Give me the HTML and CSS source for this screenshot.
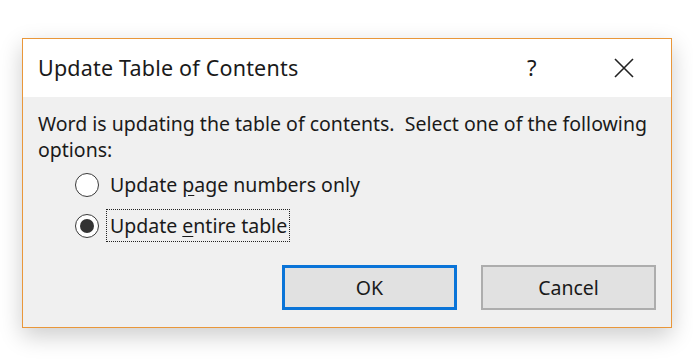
FILE: index.html
```html
<!DOCTYPE html>
<html lang="en">
  <head>
    <meta charset="UTF-8" />
    <title>Update Table of Contents</title>
    <link rel="stylesheet" href="styles.css">
  </head>
  <body>
    <div class="dialog">
      <div class="titlebar">
        <span class="title">Update Table of Contents</span>
        <span class="help">?</span>
        <svg class="close" width="20" height="20" viewBox="0 0 20 20">
          <path d="M1 1 L19 19 M19 1 L1 19" stroke="#222" stroke-width="1.6" fill="none" />
        </svg>
      </div>
      <div class="content">
        <p class="message">
          Word is updating the table of contents.&nbsp; Select one of the following options:
        </p>
        <div class="options">
          <label class="option">
            <span class="radio"></span>
            <span class="option-text">Update <u>p</u>age numbers only</span>
          </label>
          <label class="option">
            <span class="radio checked"></span>
            <span class="option-text focused">Update <u>e</u>ntire table</span>
          </label>
        </div>
        <div class="buttons">
          <button class="default">OK</button>
          <button>Cancel</button>
        </div>
      </div>
    </div>
  </body>
</html>
```

FILE: styles.css
```css
html,
body {
  height: 100%;
}
body {
  margin: 0;
  padding-top: 38px;
  box-sizing: border-box;
  background: #fff;
  font-family: "Noto Sans", "Open Sans", sans-serif;
  color: #1a1a1a;
}
.dialog {
  margin-left: 22px;
  width: 648px;
  height: 288px;
  border: 1px solid #e9973a;
  background: #f0f0f0;
  box-shadow: 0 8px 22px rgba(0, 0, 0, 0.2);
  display: flex;
  flex-direction: column;
}
.titlebar {
  height: 58px;
  background: #fff;
  display: flex;
  align-items: center;
  padding-left: 15px;
}
.title {
  font-size: 21.5px;
  flex: 1;
  padding-bottom: 2px;
  letter-spacing: 0.2px;
}
.help {
  font-size: 22px;
  width: 20px;
  margin-right: 67px;
  padding-bottom: 2px;
}
.close {
  margin-right: 37px;
}
.content {
  flex: 1;
  padding: 14px 15px 0 15px;
}
.message {
  margin: 0;
  font-size: 19.5px;
  line-height: 26px;
  width: 620px;
}
.options {
  margin-top: 9px;
  padding-left: 37px;
  display: flex;
  flex-direction: column;
  gap: 16px;
}
.option {
  display: flex;
  align-items: center;
  gap: 7px;
  font-size: 19.5px;
  height: 25px;
}
.radio {
  width: 22px;
  height: 22px;
  border: 1.5px solid #3a3a3a;
  border-radius: 50%;
  background: #fff;
  display: flex;
  align-items: center;
  justify-content: center;
}
.radio.checked::after {
  content: "";
  width: 14px;
  height: 14px;
  border-radius: 50%;
  background: #333;
}
.option-text {
  padding: 2px 2px 2px 3px;
  border: 1px solid transparent;
}
.option-text u {
  text-underline-offset: 3px;
}
.focused {
  border: 1px dotted #222;
}
.buttons {
  margin-top: 27px;
  display: flex;
  justify-content: flex-end;
  gap: 24px;
}
button {
  width: 175px;
  height: 45px;
  background: #e1e1e1;
  border: 2px solid #adadad;
  font-family: inherit;
  font-size: 19.5px;
  color: #1a1a1a;
}
button.default {
  border: 3px solid #0a74d8;
}
```
